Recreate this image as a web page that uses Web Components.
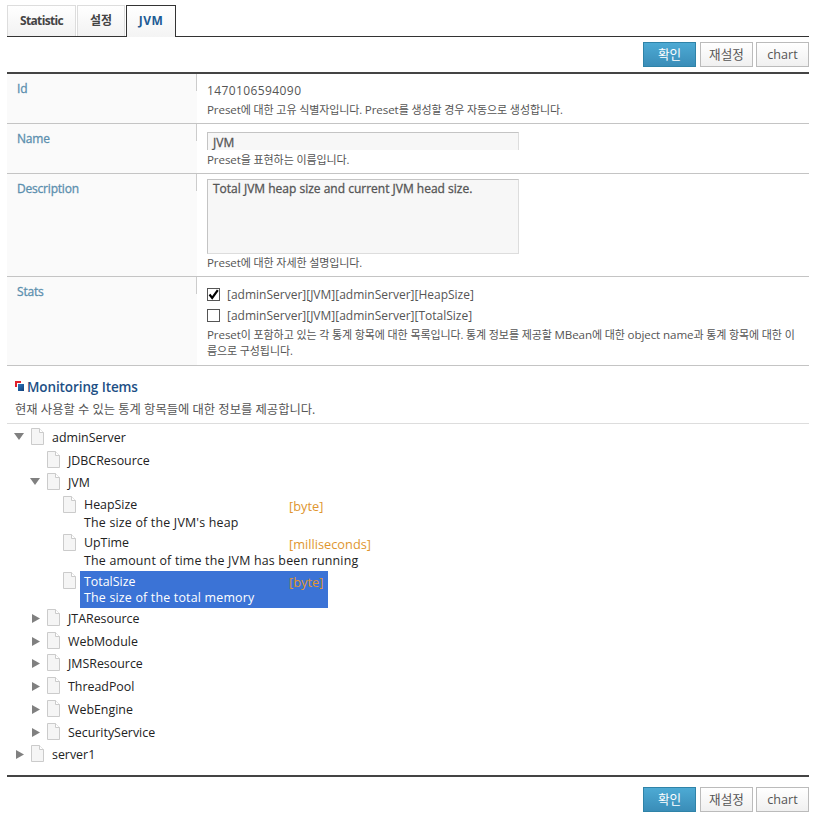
<!DOCTYPE html>
<html>
<head>
<meta charset="utf-8">
<title>JVM</title>
<style>
  html, body { margin: 0; padding: 0; background: #fff; }
  body { font: 12px "Open Sans", "Noto Sans CJK KR", sans-serif; color: #444; }
  #page { width: 802px; margin-left: 7px; }
</style>
</head>
<body>
<div id="page">
  <tab-bar>
    <tab-item style="width:69px;letter-spacing:-.65px">Statistic</tab-item>
    <tab-item style="width:48px">설정</tab-item>
    <tab-item active style="width:50px;letter-spacing:.5px">JVM</tab-item>
  </tab-bar>
  <button-bar></button-bar>
  <form-table>
    <form-row label="Id" height="49">
      <div style="margin-top:8px;height:19px;line-height:17px;color:#555;letter-spacing:.4px">1470106594090</div>
      <help-text><span>Preset</span>에 대한 고유 식별자입니다. <span>Preset</span>를 생성할 경우 자동으로 생성합니다.</help-text>
    </form-row>
    <form-row label="Name" height="49">
      <text-box value="JVM" style="margin-top:8px"></text-box>
      <help-text style="margin-top:1px"><span>Preset</span>을 표현하는 이름입니다.</help-text>
    </form-row>
    <form-row label="Description" height="102">
      <text-box value="Total JVM heap size and current JVM head size." area style="margin-top:5px"></text-box>
      <help-text><span>Preset</span>에 대한 자세한 설명입니다.</help-text>
    </form-row>
    <form-row label="Stats" height="88">
      <stat-check checked style="margin-top:6px;height:22px">[adminServer][JVM][adminServer][HeapSize]</stat-check>
      <stat-check>[adminServer][JVM][adminServer][TotalSize]</stat-check>
      <help-text style="margin-top:1px;height:16px;line-height:16px"><span>Preset</span>이 포함하고 있는 각 통계 항목에 대한 목록입니다. 통계 정보를 제공할 <span>MBean</span>에 대한 <span>object name</span>과 통계 항목에 대한 이</help-text>
      <help-text style="height:16px;line-height:16px">름으로 구성됩니다.</help-text>
    </form-row>
  </form-table>
  <section-head title="Monitoring Items">현재 사용할 수 있는 통계 항목들에 대한 정보를 제공합니다.</section-head>
  <tree-panel>
    <tree-node label="adminServer" state="open">
      <tree-node label="JDBCResource"></tree-node>
      <tree-node label="JVM" state="open">
        <tree-node label="HeapSize" unit="[byte]" desc="The size of the JVM's heap"></tree-node>
        <tree-node label="UpTime" unit="[milliseconds]" desc="The amount of time the JVM has been running"></tree-node>
        <tree-node label="TotalSize" unit="[byte]" desc="The size of the total memory" selected></tree-node>
      </tree-node>
      <tree-node label="JTAResource" state="closed"></tree-node>
      <tree-node label="WebModule" state="closed"></tree-node>
      <tree-node label="JMSResource" state="closed"></tree-node>
      <tree-node label="ThreadPool" state="closed"></tree-node>
      <tree-node label="WebEngine" state="closed"></tree-node>
      <tree-node label="SecurityService" state="closed"></tree-node>
    </tree-node>
    <tree-node label="server1" state="closed"></tree-node>
  </tree-panel>
  <button-bar bottom></button-bar>
</div>

<script>
class TabBar extends HTMLElement {
  connectedCallback() {
    this.attachShadow({ mode: 'open' });
    this.shadowRoot.innerHTML = `
      <style>
        :host { display: flex; gap: 1px; padding-top: 5px; box-sizing: border-box; height: 37px; border-bottom: 1px solid #333; }
      </style>
      <slot></slot>
    `;
  }
}

class TabItem extends HTMLElement {
  connectedCallback() {
    this.attachShadow({ mode: 'open' });
    this.shadowRoot.innerHTML = `
      <style>
        :host {
          display: block; box-sizing: border-box; height: 31px; line-height: 30px; text-align: center;
          border: 1px solid #ddd; border-bottom: 0; font-weight: 700; font-size: 12px; color: #444;
          background: linear-gradient(#fff, #f2f2f2);
        }
        :host([active]) {
          height: 32px; border-color: #333; color: #1d5b94; background: linear-gradient(#fff, #f4f4f4);
        }
      </style>
      <slot></slot>
    `;
  }
}

class ActionButton extends HTMLElement {
  connectedCallback() {
    this.attachShadow({ mode: 'open' });
    this.shadowRoot.innerHTML = `
      <style>
        :host {
          display: block; box-sizing: border-box; width: 53px; height: 25px; line-height: 24px; text-align: center;
          border: 1px solid #bbb; font-size: 12.6px; color: #555; background: linear-gradient(#fff, #f0f0f0);
        }
        :host([primary]) {
          border-color: #2f83a8; color: #fff; background: linear-gradient(#4daad4, #3a8db8);
        }
      </style>
      <slot></slot>
    `;
  }
}

class ButtonBar extends HTMLElement {
  connectedCallback() {
    this.attachShadow({ mode: 'open' });
    this.shadowRoot.innerHTML = `
      <style>
        :host { display: flex; justify-content: flex-end; box-sizing: border-box; height: 35px; padding-top: 5px; }
        :host([bottom]) { height: 42px; padding-top: 10px; border-top: 2px solid #444; }
        .second { margin: 0 3px 0 4px; }
      </style>
      <action-button primary>확인</action-button>
      <action-button class="second">재설정</action-button>
      <action-button>chart</action-button>
    `;
  }
}

class FormTable extends HTMLElement {
  connectedCallback() {
    this.attachShadow({ mode: 'open' });
    this.shadowRoot.innerHTML = `
      <style>
        :host { display: block; border-top: 2px solid #444; }
      </style>
      <slot></slot>
    `;
  }
}

class FormRow extends HTMLElement {
  connectedCallback() {
    this.attachShadow({ mode: 'open' });
    const h = this.getAttribute('height');
    this.shadowRoot.innerHTML = `
      <style>
        :host { display: grid; grid-template-columns: 190px 1fr; height: ${h}px; border-bottom: 1px solid #c4c4c4; font-size: 12px; color: #555; }
        .label {
          background: #fafafa; padding: 6px 0 0 10px; color: #5b8fae; font-size: 12px; letter-spacing: -.2px; -webkit-text-stroke: .3px #5b8fae;
          background-image: linear-gradient(#ccc, #ccc); background-repeat: no-repeat; background-position: right top; background-size: 1px 17px;
        }
        .value { padding-left: 10px; }
      </style>
      <div class="label">${this.getAttribute('label')}</div>
      <div class="value"><slot></slot></div>
    `;
  }
}

class HelpText extends HTMLElement {
  connectedCallback() {
    this.attachShadow({ mode: 'open' });
    this.shadowRoot.innerHTML = `
      <style>
        :host { display: block; height: 17px; line-height: 17px; font-size: 11px; letter-spacing: -.1px; color: #555; white-space: nowrap; }
        ::slotted(span) { font-size: 11.6px; line-height: 1; }
      </style>
      <slot></slot>
    `;
  }
}

class TextBox extends HTMLElement {
  connectedCallback() {
    this.attachShadow({ mode: 'open' });
    this.shadowRoot.innerHTML = `
      <style>
        :host {
          display: block; box-sizing: border-box; width: 312px; height: 18px; padding: 0 0 0 5px; overflow: hidden;
          background: #f7f7f7; border: 1px solid #c4c4c4; border-bottom: 0; border-right-color: #ddd;
          font-size: 12px; line-height: 19px; color: #555; -webkit-text-stroke: .3px #555; white-space: nowrap;
        }
        :host([area]) { height: 75px; border-bottom: 1px solid #ddd; line-height: 17px; }
      </style>
      ${this.getAttribute('value')}
    `;
  }
}

class StatCheck extends HTMLElement {
  connectedCallback() {
    this.attachShadow({ mode: 'open' });
    const tick = this.hasAttribute('checked')
      ? '<svg viewBox="0 0 13 13" width="13" height="13"><path d="M2.5 6.5 5.2 10 10.8 2.2" fill="none" stroke="#000" stroke-width="2.2"/></svg>'
      : '';
    this.shadowRoot.innerHTML = `
      <style>
        :host { display: flex; align-items: center; gap: 7px; height: 21px; font-size: 12px; color: #555; }
        .box { box-sizing: border-box; width: 13px; height: 13px; border: 1px solid #555; background: #fff; display: block; }
        svg { display: block; margin: -1px; }
      </style>
      <span class="box">${tick}</span>
      <span><slot></slot></span>
    `;
  }
}

class SectionHead extends HTMLElement {
  connectedCallback() {
    this.attachShadow({ mode: 'open' });
    this.shadowRoot.innerHTML = `
      <style>
        :host { display: block; height: 58px; padding: 11px 0 0 8px; box-sizing: border-box; border-bottom: 1px solid #ddd; color: #555; font-size: 12.3px; }
        h2 { display: flex; align-items: center; gap: 3px; margin: 0; height: 20px; font-size: 13.5px; font-weight: 600; color: #1d4f85; letter-spacing: -.1px; }
        .mark { position: relative; display: block; width: 9px; height: 10px; margin-bottom: 2px; }
        .mark i { position: absolute; display: block; }
        .red { left: 0; top: 0; width: 6px; height: 6px; background: #e0202c; }
        .blue { left: 2px; top: 2px; width: 7px; height: 8px; box-sizing: border-box; border: solid #fff; border-width: 1px 0 0 1px; background: linear-gradient(135deg, #2c78c0, #123f78); background-clip: padding-box; }
        p { margin: 4px 0 0; line-height: 17px; }
      </style>
      <h2><span class="mark"><i class="red"></i><i class="blue"></i></span>${this.getAttribute('title')}</h2>
      <p><slot></slot></p>
    `;
  }
}

class TreePanel extends HTMLElement {
  connectedCallback() {
    this.attachShadow({ mode: 'open' });
    this.shadowRoot.innerHTML = `
      <style>
        :host { display: block; height: 351px; box-sizing: border-box; padding: 3px 0 0 7px; font: 12.4px "Open Sans", sans-serif; color: #222; }
      </style>
      <slot></slot>
    `;
  }
}

class TreeNode extends HTMLElement {
  connectedCallback() {
    this.attachShadow({ mode: 'open' });
    const state = this.getAttribute('state');
    const arrows = {
      open: '<svg viewBox="0 0 10 7" width="10" height="7"><path d="M0 0H10L5 7Z" fill="#808080"/></svg>',
      closed: '<svg viewBox="0 0 8 9" width="8" height="9" style="margin-left:2px"><path d="M0 0V9L8 4.5Z" fill="#808080"/></svg>'
    };
    const desc = this.getAttribute('desc');
    const unit = this.getAttribute('unit');
    this.shadowRoot.innerHTML = `
      <style>
        :host { display: block; }
        .row { display: grid; grid-template-columns: 17px 16px auto; align-items: start; }
        .arrow { height: 10px; margin-top: 6px; }
        .arrow svg { display: block; }
        .file { display: block; margin-top: 1px; }
        .text { padding: 0 4px; margin-left: 1px; }
        .leaf { height: 22.7px; box-sizing: border-box; padding-top: 1px; line-height: 20px; white-space: nowrap; }
        .detail { width: 240px; padding-top: 1px; height: 37px; line-height: 17px; white-space: nowrap; display: grid; grid-template-columns: 205px auto; align-content: start; }
        .detail .name { line-height: 18px; }
        .unit { color: #e0962f; line-height: 18px; font-size: 12.8px; margin-top: 1px; }
        .desc { grid-column: 1 / 3; letter-spacing: .2px; margin-top: -1px; }
        :host([selected]) .detail { background: #3b73d6; color: #fff; height: 35px; padding-top: 2px; }
        :host([selected]) .unit { margin-top: 0; }
        :host([selected]) .desc { margin-top: -2px; }
        .kids { padding-left: 16px; }
      </style>
      <div class="row">
        <div class="arrow">${arrows[state] || ''}</div>
        <svg class="file" viewBox="0 0 13 17" width="13" height="17"><path d="M.5.5H8.5L12.5 4.5V16.5H.5Z" fill="#f5f5f5" stroke="#cbcbcb"/><path d="M8.5.5V4.5H12.5" fill="#fff" stroke="#cbcbcb"/></svg>
        ${desc
          ? `<div class="text detail"><span class="name">${this.getAttribute('label')}</span><span class="unit">${unit}</span><span class="desc">${desc}</span></div>`
          : `<div class="text leaf">${this.getAttribute('label')}</div>`}
      </div>
      <div class="kids"><slot></slot></div>
    `;
  }
}

customElements.define('tab-bar', TabBar);
customElements.define('tab-item', TabItem);
customElements.define('action-button', ActionButton);
customElements.define('button-bar', ButtonBar);
customElements.define('form-table', FormTable);
customElements.define('form-row', FormRow);
customElements.define('help-text', HelpText);
customElements.define('text-box', TextBox);
customElements.define('stat-check', StatCheck);
customElements.define('section-head', SectionHead);
customElements.define('tree-panel', TreePanel);
customElements.define('tree-node', TreeNode);
</script>
</body>
</html>
